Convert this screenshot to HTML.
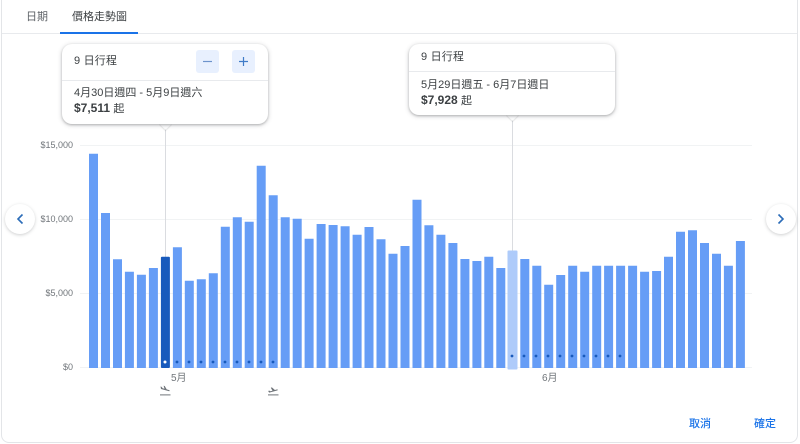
<!DOCTYPE html>
<html lang="zh-Hant">
<head>
<meta charset="utf-8">
<style>
html,body{margin:0;padding:0;background:#fff}
body{width:800px;height:444px;overflow:hidden;position:relative;font-family:"Liberation Sans","Noto Sans CJK TC",sans-serif;color:#3c4043}
#w{position:absolute;left:0;top:0;width:800px;height:444px;filter:blur(.35px)}
.card{position:absolute;left:1px;top:-8px;width:797px;height:451px;border:1px solid #e3e5e8;border-radius:8px;box-sizing:border-box}
.t{position:absolute;white-space:nowrap;line-height:14px}
.tab{font-size:11px;top:10px;color:#5f6368}
.ax{font-size:9px;color:#70757a;text-align:right;width:40px;left:33px;line-height:12px}
.tip{position:absolute;background:#fff;border-radius:10px;box-shadow:0 1px 2px rgba(60,64,67,.3),0 1px 4px 1px rgba(60,64,67,.16)}
.notch{position:absolute;width:9px;height:9px;background:#fff;transform:rotate(45deg);box-shadow:1px 1px 1px rgba(60,64,67,.12)}
.hr{position:absolute;left:0;right:0;height:1px;background:#e8eaed}
.b{position:absolute;width:23px;height:23px;top:6px;background:#e8f0fe;border-radius:3px}
.nav{position:absolute;width:30px;height:30px;border-radius:50%;background:#fff;box-shadow:0 1px 3px rgba(60,64,67,.25)}
.btn{font-size:11px;color:#1a73e8;top:417px;font-weight:500}
</style>
</head>
<body>
<div id="w">
<div class="card"></div>

<div class="t tab" style="left:26px">日期</div>
<div class="t tab" style="left:72px;color:#3c4043">價格走勢圖</div>
<div style="position:absolute;left:2px;top:33px;width:795px;height:1px;background:#e8eaed"></div>
<div style="position:absolute;left:60px;top:32px;width:78px;height:2px;background:#1a73e8"></div>

<svg width="800" height="444" style="position:absolute;left:0;top:0">
  <g fill="#f1f3f4">
    <rect x="80" y="145" width="672" height="1"/>
    <rect x="80" y="219" width="672" height="1"/>
    <rect x="80" y="293" width="672" height="1"/>
    <rect x="80" y="367" width="672" height="1"/>
  </g>
  <rect x="165" y="124" width="1" height="240" fill="#dadce0"/>
  <rect x="512" y="115" width="1" height="136" fill="#dadce0"/>
  <path fill="#669df6" d="M89 153.7h9V368h-9zM101 213h9V368h-9zM113 259.3h9V368h-9zM124.9 271.7h9V368h-9zM136.9 274.7h9V368h-9zM148.9 268h9V368h-9zM172.9 247.3h9V368h-9zM184.8 280.7h9V368h-9zM196.8 279.3h9V368h-9zM208.8 273.3h9V368h-9zM220.8 226.8h9V368h-9zM232.8 217.3h9V368h-9zM244.7 221.7h9V368h-9zM256.7 165.7h9V368h-9zM268.7 195.3h9V368h-9zM280.7 217.3h9V368h-9zM292.7 218.7h9V368h-9zM304.6 238.7h9V368h-9zM316.6 224h9V368h-9zM328.6 225h9V368h-9zM340.6 226.3h9V368h-9zM352.6 234.7h9V368h-9zM364.5 227h9V368h-9zM376.5 239.3h9V368h-9zM388.5 253.7h9V368h-9zM400.5 246h9V368h-9zM412.5 199.7h9V368h-9zM424.4 225.3h9V368h-9zM436.4 234.7h9V368h-9zM448.4 243h9V368h-9zM460.4 259h9V368h-9zM472.4 261h9V368h-9zM484.3 256.7h9V368h-9zM496.3 268h9V368h-9zM520.3 259h9V368h-9zM532.3 265.7h9V368h-9zM544.2 284.7h9V368h-9zM556.2 275h9V368h-9zM568.2 265.7h9V368h-9zM580.2 271.7h9V368h-9zM592.2 265.7h9V368h-9zM604.1 265.7h9V368h-9zM616.1 265.7h9V368h-9zM628.1 265.7h9V368h-9zM640.1 271.7h9V368h-9zM652.1 271h9V368h-9zM664 256.7h9V368h-9zM676 231.7h9V368h-9zM688 230.3h9V368h-9zM700 243h9V368h-9zM712 253.7h9V368h-9zM723.9 265.7h9V368h-9zM735.9 241h9V368h-9z"/>
  <rect x="160.9" y="256.7" width="9" height="111.3" rx="1" fill="#185abc"/>
  <rect x="507.5" y="250.5" width="10" height="119" rx="1" fill="#aecbfa"/>
  <circle cx="165" cy="362" r="1.5" fill="#fff"/>
  <g fill="#185abc">
    <circle cx="177" cy="362" r="1.4"/><circle cx="189" cy="362" r="1.4"/><circle cx="201" cy="362" r="1.4"/><circle cx="213" cy="362" r="1.4"/><circle cx="225" cy="362" r="1.4"/><circle cx="237" cy="362" r="1.4"/><circle cx="249" cy="362" r="1.4"/><circle cx="261" cy="362" r="1.4"/><circle cx="273" cy="362" r="1.4"/>
    <circle cx="512" cy="356" r="1.4"/><circle cx="524" cy="356" r="1.4"/><circle cx="536" cy="356" r="1.4"/><circle cx="548" cy="356" r="1.4"/><circle cx="560" cy="356" r="1.4"/><circle cx="572" cy="356" r="1.4"/><circle cx="584" cy="356" r="1.4"/><circle cx="596" cy="356" r="1.4"/><circle cx="608" cy="356" r="1.4"/><circle cx="620" cy="356" r="1.4"/>
  </g>
  <!-- landing / takeoff icons -->
  <g fill="#70757a">
    <rect x="160" y="394.400" width="10.500" height="1"/>
    <path d="M160.500 386.500l1 .2 1.200 1.500 1.800.5-.9-3 1.100.3 2 3.400 2.500.7c.6.2.6 1 0 1.100l-8.200-2.200z"/>
    <rect x="268" y="394.400" width="10.500" height="1"/>
    <path d="M268.500 391.800l-.2-.9 1-.3 1.200.6 2-.5-1.700-3 1.100-.3 3 2.600 2.200-.6c.6-.1.9.6.4 1l-8.200 2.200z"/>
  </g>
</svg>

<div class="t ax" style="top:139px">$15,000</div>
<div class="t ax" style="top:213px">$10,000</div>
<div class="t ax" style="top:287px">$5,000</div>
<div class="t ax" style="top:361px">$0</div>

<div class="t" style="left:171px;top:372px;font-size:10px;color:#70757a">5月</div>
<div class="t" style="left:542px;top:372px;font-size:10px;color:#70757a">6月</div>

<!-- tooltip 1 -->
<div class="notch" style="left:160.500px;top:119px"></div>
<div class="tip" style="left:62px;top:44px;width:206px;height:80px">
  <div class="t" style="left:12px;top:10px;font-size:11px;letter-spacing:.2px">9 日行程</div>
  <div class="b" style="left:134px"><svg width="23" height="23"><path d="M7 11.500h9" stroke="#6d93cc" stroke-width="1.200"/></svg></div>
  <div class="b" style="left:170px"><svg width="23" height="23"><path d="M7 11.500h9M11.500 7v9" stroke="#3f7bc8" stroke-width="1.200"/></svg></div>
  <div class="hr" style="top:36px"></div>
  <div class="t" style="left:12px;top:42px;font-size:11px">4月30日週四 - 5月9日週六</div>
  <div class="t" style="left:12px;top:57px;font-size:12px"><b>$7,511</b> <span style="font-size:11px">起</span></div>
</div>

<!-- tooltip 2 -->
<div class="notch" style="left:508px;top:110px"></div>
<div class="tip" style="left:409px;top:44px;width:206px;height:71px">
  <div class="t" style="left:12px;top:6px;font-size:11px;letter-spacing:.2px">9 日行程</div>
  <div class="hr" style="top:27px"></div>
  <div class="t" style="left:12px;top:34px;font-size:11px">5月29日週五 - 6月7日週日</div>
  <div class="t" style="left:12px;top:49px;font-size:12px"><b>$7,928</b> <span style="font-size:11px">起</span></div>
</div>

<!-- nav -->
<div class="nav" style="left:5px;top:204px"><svg width="30" height="30"><path d="M17.500 10.500l-4.500 4.500 4.500 4.500" fill="none" stroke="#2b6cb8" stroke-width="1.600"/></svg></div>
<div class="nav" style="left:766px;top:204px"><svg width="30" height="30"><path d="M12.500 10.500l4.500 4.500-4.500 4.500" fill="none" stroke="#2b6cb8" stroke-width="1.600"/></svg></div>

<div class="t btn" style="left:689px">取消</div>
<div class="t btn" style="left:754px">確定</div>
</div>
</body>
</html>
